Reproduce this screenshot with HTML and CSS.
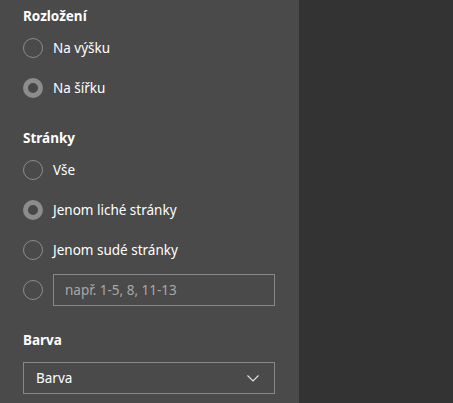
FILE: index.html
```html
<!DOCTYPE html>
<html lang="cs">
<head>
<meta charset="utf-8">
<link rel="stylesheet" href="styles.css">
</head>
<body>
<div class="app">
  <aside class="panel">
    <section class="group">
      <h3 class="heading">Rozložení</h3>
      <label class="option"><span class="radio"></span><span class="label">Na výšku</span></label>
      <label class="option"><span class="radio checked"></span><span class="label">Na šířku</span></label>
    </section>
    <section class="group">
      <h3 class="heading">Stránky</h3>
      <label class="option"><span class="radio"></span><span class="label">Vše</span></label>
      <label class="option"><span class="radio checked"></span><span class="label">Jenom liché stránky</span></label>
      <label class="option"><span class="radio"></span><span class="label">Jenom sudé stránky</span></label>
      <div class="option"><span class="radio"></span><span class="input">např. 1-5, 8, 11-13</span></div>
    </section>
    <section class="group">
      <h3 class="heading">Barva</h3>
      <div class="select"><span>Barva</span>
        <svg class="chev" width="12" height="7" viewBox="0 0 12 7"><path d="M0.5 0.5 L6 6 L11.5 0.5" fill="none" stroke="#e6e6e6" stroke-width="1.1"/></svg>
      </div>
    </section>
  </aside>
  <main class="preview"></main>
</div>
</body>
</html>
```
FILE: styles.css
```css
html, body { margin: 0; padding: 0; height: 100%; }
body { font-family: "Noto Sans", "Open Sans", sans-serif; font-size: 13.5px; color: #fff; background: #333; }
.app { display: flex; height: 403px; overflow: hidden; }
.panel { width: 299px; flex: none; background: #4a4a4a; padding: 0 24px 0 23px; box-sizing: border-box; }
.preview { flex: 1; background: #333; }
.group { display: flex; flex-direction: column; margin-bottom: 14px; }
.heading { margin: 0; font-size: 13.5px; font-weight: 700; line-height: 18px; padding-top: 7px; height: 21px; }
.option { display: flex; align-items: center; gap: 10px; height: 40px; }
.radio { width: 20px; height: 20px; box-sizing: border-box; border: 1px solid #8c8c8c; border-radius: 50%; flex: none; }
.radio.checked { border: 5px solid #8c8c8c; background: #474747; }
.label { line-height: 20px; }
.input { flex: 1; height: 32px; box-sizing: border-box; border: 1px solid #878787; display: flex; align-items: center; padding-left: 11px; color: #a8a8a8; }
.select { height: 32px; box-sizing: border-box; border: 1px solid #878787; display: flex; align-items: center; justify-content: space-between; padding: 0 15px 0 12px; margin-top: 10px; }
```
